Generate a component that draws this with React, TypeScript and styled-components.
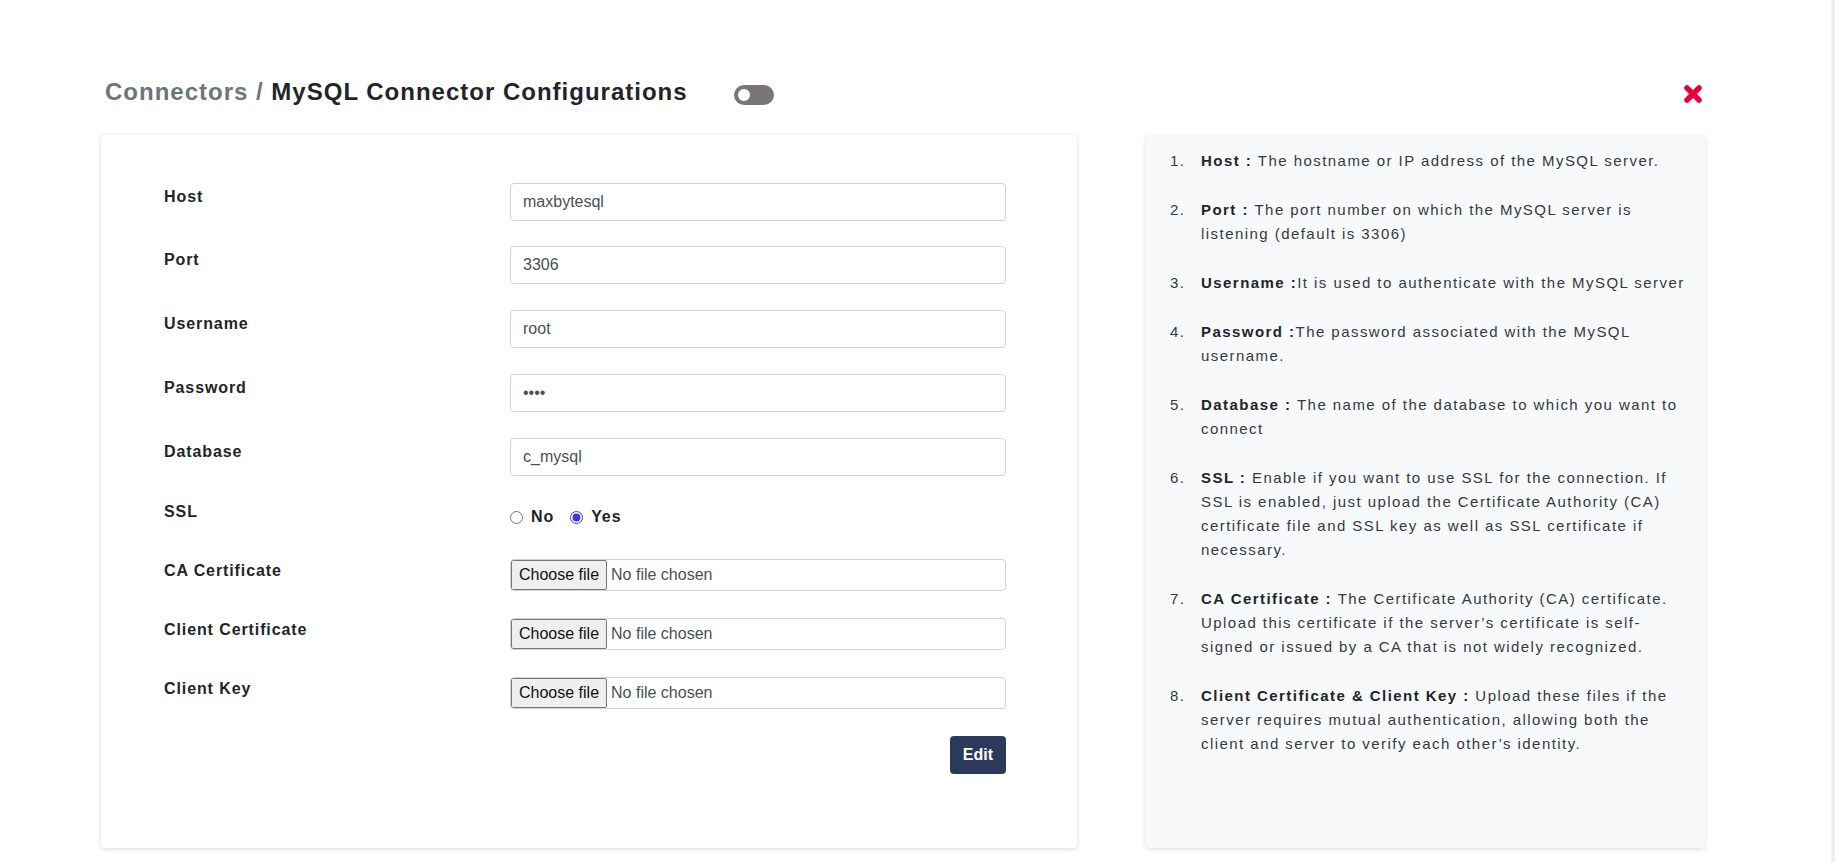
import React from "react";
import styled, { createGlobalStyle } from "styled-components";

const GlobalStyle = createGlobalStyle`
  html, body { margin: 0; padding: 0; background: #fff; }
  body { font-family: "Liberation Sans", Arial, sans-serif; color: #212529; }
  * { box-sizing: border-box; }
`;

const Shell = styled.div`
  display: flex;
  min-height: 862px;
`;

const Main = styled.main`
  flex: 1;
  padding: 77px 126px 0 101px;
`;

const ScrollTrack = styled.div`
  width: 4px;
  background: #efefef;
`;

const Header = styled.header`
  display: flex;
  align-items: center;
  height: 30px;
  margin-bottom: 28px;
`;

const Title = styled.h1`
  margin: 0 0 0 4px;
  font-family: "Liberation Sans", Arial, sans-serif;
  font-weight: 700;
  font-size: 24px;
  line-height: 30px;
  letter-spacing: 1px;
  color: #212529;
  white-space: nowrap;
`;

const Crumb = styled.span`
  color: #6c757d;
`;

const Toggle = styled.span`
  width: 40px;
  height: 20px;
  border-radius: 10px;
  background: #7a7676;
  margin-left: 46px;
  margin-top: 6px;
  display: flex;
  align-items: center;
  padding-left: 4px;
  flex-shrink: 0;
  &::before {
    content: "";
    width: 12px;
    height: 12px;
    border-radius: 50%;
    background: #fff;
  }
`;

const CloseButton = styled.button`
  margin-left: auto;
  margin-right: 2px;
  margin-top: 3px;
  border: 0;
  background: none;
  padding: 0;
  width: 20px;
  height: 20px;
  display: flex;
  cursor: pointer;
`;

const Columns = styled.div`
  display: grid;
  grid-template-columns: 976px 559px;
  column-gap: 69px;
  align-items: stretch;
`;

const FormCard = styled.section`
  background: #fff;
  border-radius: 4px;
  box-shadow: 0 1px 4px rgba(0, 0, 0, 0.16);
  padding: 47.5px 71px 74.5px 63px;
`;

const FieldRow = styled.div<{ $mb: number }>`
  display: grid;
  grid-template-columns: 346px 1fr;
  align-items: start;
  margin-bottom: ${(p) => p.$mb}px;
`;

const Label = styled.label<{ $pt?: number }>`
  padding-top: ${(p) => p.$pt ?? 0}px;
  font-size: 16px;
  font-weight: 700;
  line-height: 24px;
  letter-spacing: 0.9px;
  color: #212529;
`;

const TextInput = styled.input`
  height: 38px;
  width: 100%;
  padding: 6px 12px;
  font: 16px "Liberation Sans", Arial, sans-serif;
  color: #495057;
  border: 1px solid #ced4da;
  border-radius: 4px;
  background: #fff;
  outline: none;
`;

const RadioGroup = styled.div`
  display: flex;
  align-items: center;
  padding-top: 5px;
  line-height: 24px;
`;

const RadioOption = styled.label`
  display: flex;
  align-items: center;
  gap: 8px;
  font-weight: 700;
  font-size: 16px;
  letter-spacing: 0.9px;
  margin-right: 16px;
`;

const Radio = styled.input`
  margin: 0;
  width: 13px;
  height: 13px;
  accent-color: #3d35ee;
`;

const FilePicker = styled.div`
  display: flex;
  align-items: center;
  height: 32px;
  border: 1px solid #ced4da;
  border-radius: 4px;
  overflow: hidden;
`;

const ChooseButton = styled.button`
  height: 30px;
  padding: 0 7px;
  margin: 0;
  font: 16px "Liberation Sans", Arial, sans-serif;
  color: #111;
  background: #efefef;
  border: 1px solid #767676;
  border-radius: 2px;
`;

const FileStatus = styled.span`
  margin-left: 4px;
  font-size: 16px;
  color: #495057;
`;

const Actions = styled.div`
  display: flex;
  justify-content: flex-end;
`;

const EditButton = styled.button`
  height: 38px;
  padding: 0 13px;
  border: 0;
  border-radius: 4px;
  background: #2b3a5a;
  color: #fff;
  font: 700 16px "Liberation Sans", Arial, sans-serif;
  cursor: pointer;
`;

const HelpCard = styled.aside`
  background: #f8f9fa;
  border-radius: 4px;
  box-shadow: 0 1px 4px rgba(0, 0, 0, 0.16);
  padding: 14px 15px;
`;

const HelpList = styled.ol`
  margin: 0;
  padding-left: 30px;
  font-size: 15px;
  line-height: 24px;
  letter-spacing: 1.45px;
  color: #343a40;
`;

const HelpItem = styled.li`
  margin-bottom: 25px;
  padding-left: 10px;
`;

const Term = styled.strong`
  color: #212529;
`;

const CloseIcon = () => (
  <svg width="20" height="20" viewBox="0 0 20 20" aria-hidden="true">
    <path d="M4 4 L16 16 M16 4 L4 16" stroke="#e8003a" strokeWidth="5.5" strokeLinecap="round" fill="none" />
  </svg>
);

const textFields = [
  { label: "Host", value: "maxbytesql", type: "text", mb: 25.75 },
  { label: "Port", value: "3306", type: "text", mb: 25.75 },
  { label: "Username", value: "root", type: "text", mb: 25.75 },
  { label: "Password", value: "1234", type: "password", mb: 25.75 },
  { label: "Database", value: "c_mysql", type: "text", mb: 24.5 },
];

const fileFields = [
  { label: "CA Certificate", mb: 27 },
  { label: "Client Certificate", mb: 27 },
  { label: "Client Key", mb: 26.7 },
];

const help: { term: string; text: string }[] = [
  { term: "Host : ", text: "The hostname or IP address of the MySQL server." },
  { term: "Port : ", text: "The port number on which the MySQL server is listening (default is 3306)" },
  { term: "Username :", text: "It is used to authenticate with the MySQL server" },
  { term: "Password :", text: "The password associated with the MySQL username." },
  { term: "Database : ", text: "The name of the database to which you want to connect" },
  {
    term: "SSL : ",
    text: "Enable if you want to use SSL for the connection. If SSL is enabled, just upload the Certificate Authority (CA) certificate file and SSL key as well as SSL certificate if necessary.",
  },
  {
    term: "CA Certificate : ",
    text: "The Certificate Authority (CA) certificate. Upload this certificate if the server\u2019s certificate is self-signed or issued by a CA that is not widely recognized.",
  },
  {
    term: "Client Certificate & Client Key : ",
    text: "Upload these files if the server requires mutual authentication, allowing both the client and server to verify each other\u2019s identity.",
  },
];

export default function App() {
  return (
    <>
      <GlobalStyle />
      <Shell>
        <Main>
          <Header>
            <Title>
              <Crumb>Connectors / </Crumb>MySQL Connector Configurations
            </Title>
            <Toggle />
            <CloseButton aria-label="Close">
              <CloseIcon />
            </CloseButton>
          </Header>
          <Columns>
            <FormCard>
              {textFields.map((f) => (
                <FieldRow key={f.label} $mb={f.mb}>
                  <Label $pt={2}>{f.label}</Label>
                  <TextInput type={f.type} value={f.value} readOnly />
                </FieldRow>
              ))}
              <FieldRow $mb={30.3}>
                <Label>SSL</Label>
                <RadioGroup>
                  <RadioOption>
                    <Radio type="radio" name="ssl" readOnly checked={false} />
                    No
                  </RadioOption>
                  <RadioOption>
                    <Radio type="radio" name="ssl" readOnly checked />
                    Yes
                  </RadioOption>
                </RadioGroup>
              </FieldRow>
              {fileFields.map((f) => (
                <FieldRow key={f.label} $mb={f.mb}>
                  <Label>{f.label}</Label>
                  <FilePicker>
                    <ChooseButton type="button">Choose file</ChooseButton>
                    <FileStatus>No file chosen</FileStatus>
                  </FilePicker>
                </FieldRow>
              ))}
              <Actions>
                <EditButton type="button">Edit</EditButton>
              </Actions>
            </FormCard>
            <HelpCard>
              <HelpList>
                {help.map((h) => (
                  <HelpItem key={h.term}>
                    <Term>{h.term}</Term>
                    {h.text}
                  </HelpItem>
                ))}
              </HelpList>
            </HelpCard>
          </Columns>
        </Main>
        <ScrollTrack />
      </Shell>
    </>
  );
}
